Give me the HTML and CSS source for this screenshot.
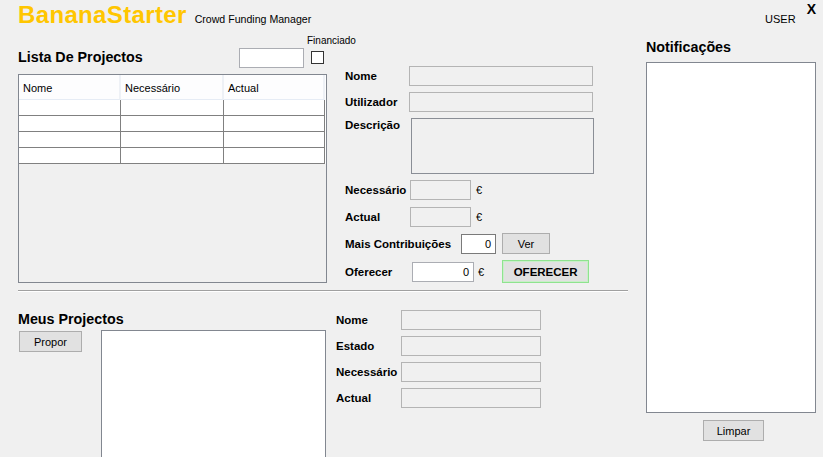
FILE: index.html
```html
<!DOCTYPE html>
<html>
<head>
<meta charset="utf-8">
<link rel="stylesheet" href="styles.css">
</head>
<body>
<div class="app">
  <header class="topbar">
    <span class="brand">BananaStarter</span>
    <span class="tagline">Crowd Funding Manager</span>
    <span class="user">USER</span>
    <span class="close">X</span>
  </header>
  <div class="main">
    <div class="left">
      <div class="top-area">
        <div class="list-col">
          <div class="list-head">
            <span class="section-title">Lista De Projectos</span>
            <div class="filter-box"></div>
            <div class="fin-group">
              <span class="fin-label">Financiado</span>
              <span class="checkbox"></span>
            </div>
          </div>
          <div class="grid-table">
            <div class="grid-row head">
              <div class="cell">Nome</div>
              <div class="cell">Necessário</div>
              <div class="cell">Actual</div>
            </div>
            <div class="grid-row"><div class="cell"></div><div class="cell"></div><div class="cell"></div></div>
            <div class="grid-row"><div class="cell"></div><div class="cell"></div><div class="cell"></div></div>
            <div class="grid-row"><div class="cell"></div><div class="cell"></div><div class="cell"></div></div>
            <div class="grid-row"><div class="cell"></div><div class="cell"></div><div class="cell"></div></div>
          </div>
        </div>
        <div class="detail-col">
          <div class="frow r-nome"><span class="lbl w64">Nome</span><span class="tbox wide"></span></div>
          <div class="frow r-util"><span class="lbl w64">Utilizador</span><span class="tbox wide"></span></div>
          <div class="frow r-desc"><span class="lbl w65 top">Descrição</span><span class="tbox area"></span></div>
          <div class="frow r-nec"><span class="lbl w65">Necessário</span><span class="tbox small"></span><span class="euro">€</span></div>
          <div class="frow r-act"><span class="lbl w65">Actual</span><span class="tbox small"></span><span class="euro">€</span></div>
          <div class="frow r-mais"><span class="lbl w116">Mais Contribuições</span><span class="ibox mais">0</span><span class="btn ver">Ver</span></div>
          <div class="frow r-ofer"><span class="lbl w67">Oferecer</span><span class="ibox ofer">0</span><span class="euro e2">€</span><span class="btn offer">OFERECER</span></div>
        </div>
      </div>
      <div class="separator"></div>
      <div class="bottom-area">
        <div class="mine-col">
          <div class="section-title mine-title">Meus Projectos</div>
          <div class="mine-row">
            <span class="btn propor">Propor</span>
            <div class="listbox mine-list"></div>
          </div>
        </div>
        <div class="mine-detail">
          <div class="frow b-row"><span class="lbl w65">Nome</span><span class="tbox mid"></span></div>
          <div class="frow b-row"><span class="lbl w65">Estado</span><span class="tbox mid"></span></div>
          <div class="frow b-row"><span class="lbl w65">Necessário</span><span class="tbox mid"></span></div>
          <div class="frow b-row"><span class="lbl w65">Actual</span><span class="tbox mid"></span></div>
        </div>
      </div>
    </div>
    <div class="right">
      <div class="section-title notif-title">Notificações</div>
      <div class="listbox notif-list"></div>
      <span class="btn limpar">Limpar</span>
    </div>
  </div>
</div>
</body>
</html>
```
FILE: styles.css
```css
* { box-sizing: border-box; }
html, body {
  margin: 0;
  padding: 0;
  background: #f0f0f0;
}
body {
  width: 823px;
  height: 457px;
  overflow: hidden;
  font-family: "Liberation Sans", Arial, sans-serif;
  font-size: 11px;
  color: #000;
}
.app { display: flex; flex-direction: column; }

.topbar {
  height: 30px;
  display: flex;
  align-items: baseline;
  padding: 3px 7px 0 18px;
}
.brand {
  font-size: 24px;
  line-height: 24px;
  font-weight: bold;
  color: #ffc600;
  letter-spacing: 0.35px;
}
.tagline {
  font-size: 10.6px;
  margin-left: 8px;
}
.user {
  margin-left: auto;
  font-size: 11px;
}
.close {
  align-self: flex-start;
  margin-top: -2px;
  margin-left: 11px;
  font-size: 14px;
  line-height: 16px;
  font-weight: bold;
}

.main { display: flex; }
.left { width: 628px; padding-left: 18px; }
.right { margin-left: 18px; width: 170px; display: flex; flex-direction: column; }

.top-area { display: flex; }
.list-col { width: 309px; }
.list-head { display: flex; height: 44px; align-items: flex-start; }
.section-title {
  font-size: 14.3px;
  line-height: 17px;
  font-weight: bold;
}
.list-head .section-title { margin-top: 19px; }
.filter-box {
  margin-left: auto;
  margin-top: 18px;
  width: 65px;
  height: 20px;
  background: #fff;
  border: 1px solid #abadb3;
}
.fin-group {
  width: 20px;
  margin-left: 3px;
  display: flex;
  flex-direction: column;
  margin-top: 5px;
}
.fin-label {
  font-size: 10px;
  line-height: 12px;
  white-space: nowrap;
}
.checkbox {
  margin-top: 4px;
  margin-left: 4px;
  width: 13px;
  height: 13px;
  background: #fff;
  border: 1px solid #333;
}

.grid-table {
  height: 209px;
  border: 1px solid #828790;
  background: #f0f0f0;
}
.grid-row {
  display: grid;
  grid-template-columns: 102px 103px 101px;
  height: 16px;
  background: #fff;
}
.grid-row .cell {
  border-right: 1px solid #808080;
  border-bottom: 1px solid #808080;
}
.grid-row.head {
  height: 25px;
  background: #fdfdfe;
}
.grid-row.head .cell {
  border-right: 2px solid #eef1f6;
  border-bottom: 1px solid #e6ecf5;
  padding: 7px 0 0 4px;
  font-size: 11px;
  line-height: 13px;
}

.detail-col { margin-left: 18px; padding-top: 36px; display: flex; flex-direction: column; }
.frow { display: flex; align-items: center; }
.lbl {
  font-size: 11.5px;
  font-weight: bold;
  white-space: nowrap;
}
.lbl.top { align-self: flex-start; padding-top: 1px; }
.w64 { width: 64px; }
.w65 { width: 65px; }
.w67 { width: 67px; }
.w116 { width: 116px; }
.tbox {
  height: 20px;
  background: #f0f0f0;
  border: 1px solid #b4b4b4;
}
.tbox.wide { width: 184px; }
.tbox.area { width: 183px; height: 56px; margin-left: 1px; border-color: #8a8e96; }
.tbox.small { width: 61px; }
.tbox.mid { width: 140px; }
.euro { margin-left: 5px; font-size: 11px; }
.euro.e2 { margin-left: 4px; }

.r-nome, .r-util { height: 20px; margin-bottom: 6px; }
.r-desc { height: 56px; margin-bottom: 6px; align-items: flex-start; }
.r-nec { height: 20px; margin-bottom: 7px; }
.r-act { height: 20px; margin-bottom: 6px; }
.r-mais { height: 21px; margin-bottom: 6px; }
.r-ofer { height: 23px; }

.ibox {
  height: 20px;
  background: #fff;
  border: 1px solid #7a7a7a;
  text-align: right;
  padding: 3px 4px 0 0;
  font-size: 11px;
  line-height: 13px;
}
.ibox.mais { width: 35px; }
.ibox.ofer { width: 62px; border-color: #abadb3; }

.btn {
  display: flex;
  align-items: center;
  justify-content: center;
  background: #e1e1e1;
  border: 1px solid #adadad;
  font-size: 11px;
  height: 21px;
}
.btn.ver { width: 48px; margin-left: 6px; }
.btn.offer {
  width: 87px;
  height: 23px;
  margin-left: 18px;
  font-weight: bold;
  font-size: 11.5px;
  border: 1px solid #8fe38f;
  box-shadow: inset 0 0 0 1px #c9efc9;
}

.separator {
  margin-top: 7px;
  width: 610px;
  height: 2px;
  border-top: 1px solid #a0a0a0;
  border-bottom: 1px solid #ffffff;
}

.bottom-area { display: flex; }
.mine-col { width: 308px; padding-top: 19px; }
.mine-title { margin-bottom: 2px; }
.mine-row { display: flex; align-items: flex-start; }
.btn.propor { width: 63px; margin-left: 1px; margin-top: 1px; }
.listbox {
  background: #fff;
  border: 1px solid #828790;
}
.mine-list { width: 225px; height: 140px; margin-left: 19px; }

.mine-detail { margin-left: 10px; padding-top: 18px; display: flex; flex-direction: column; }
.b-row { height: 20px; margin-bottom: 6px; }

.notif-title { margin-top: 9px; margin-bottom: 6px; }
.notif-list { width: 170px; height: 351px; }
.btn.limpar { width: 61px; margin-top: 7px; margin-left: 57px; }
```
